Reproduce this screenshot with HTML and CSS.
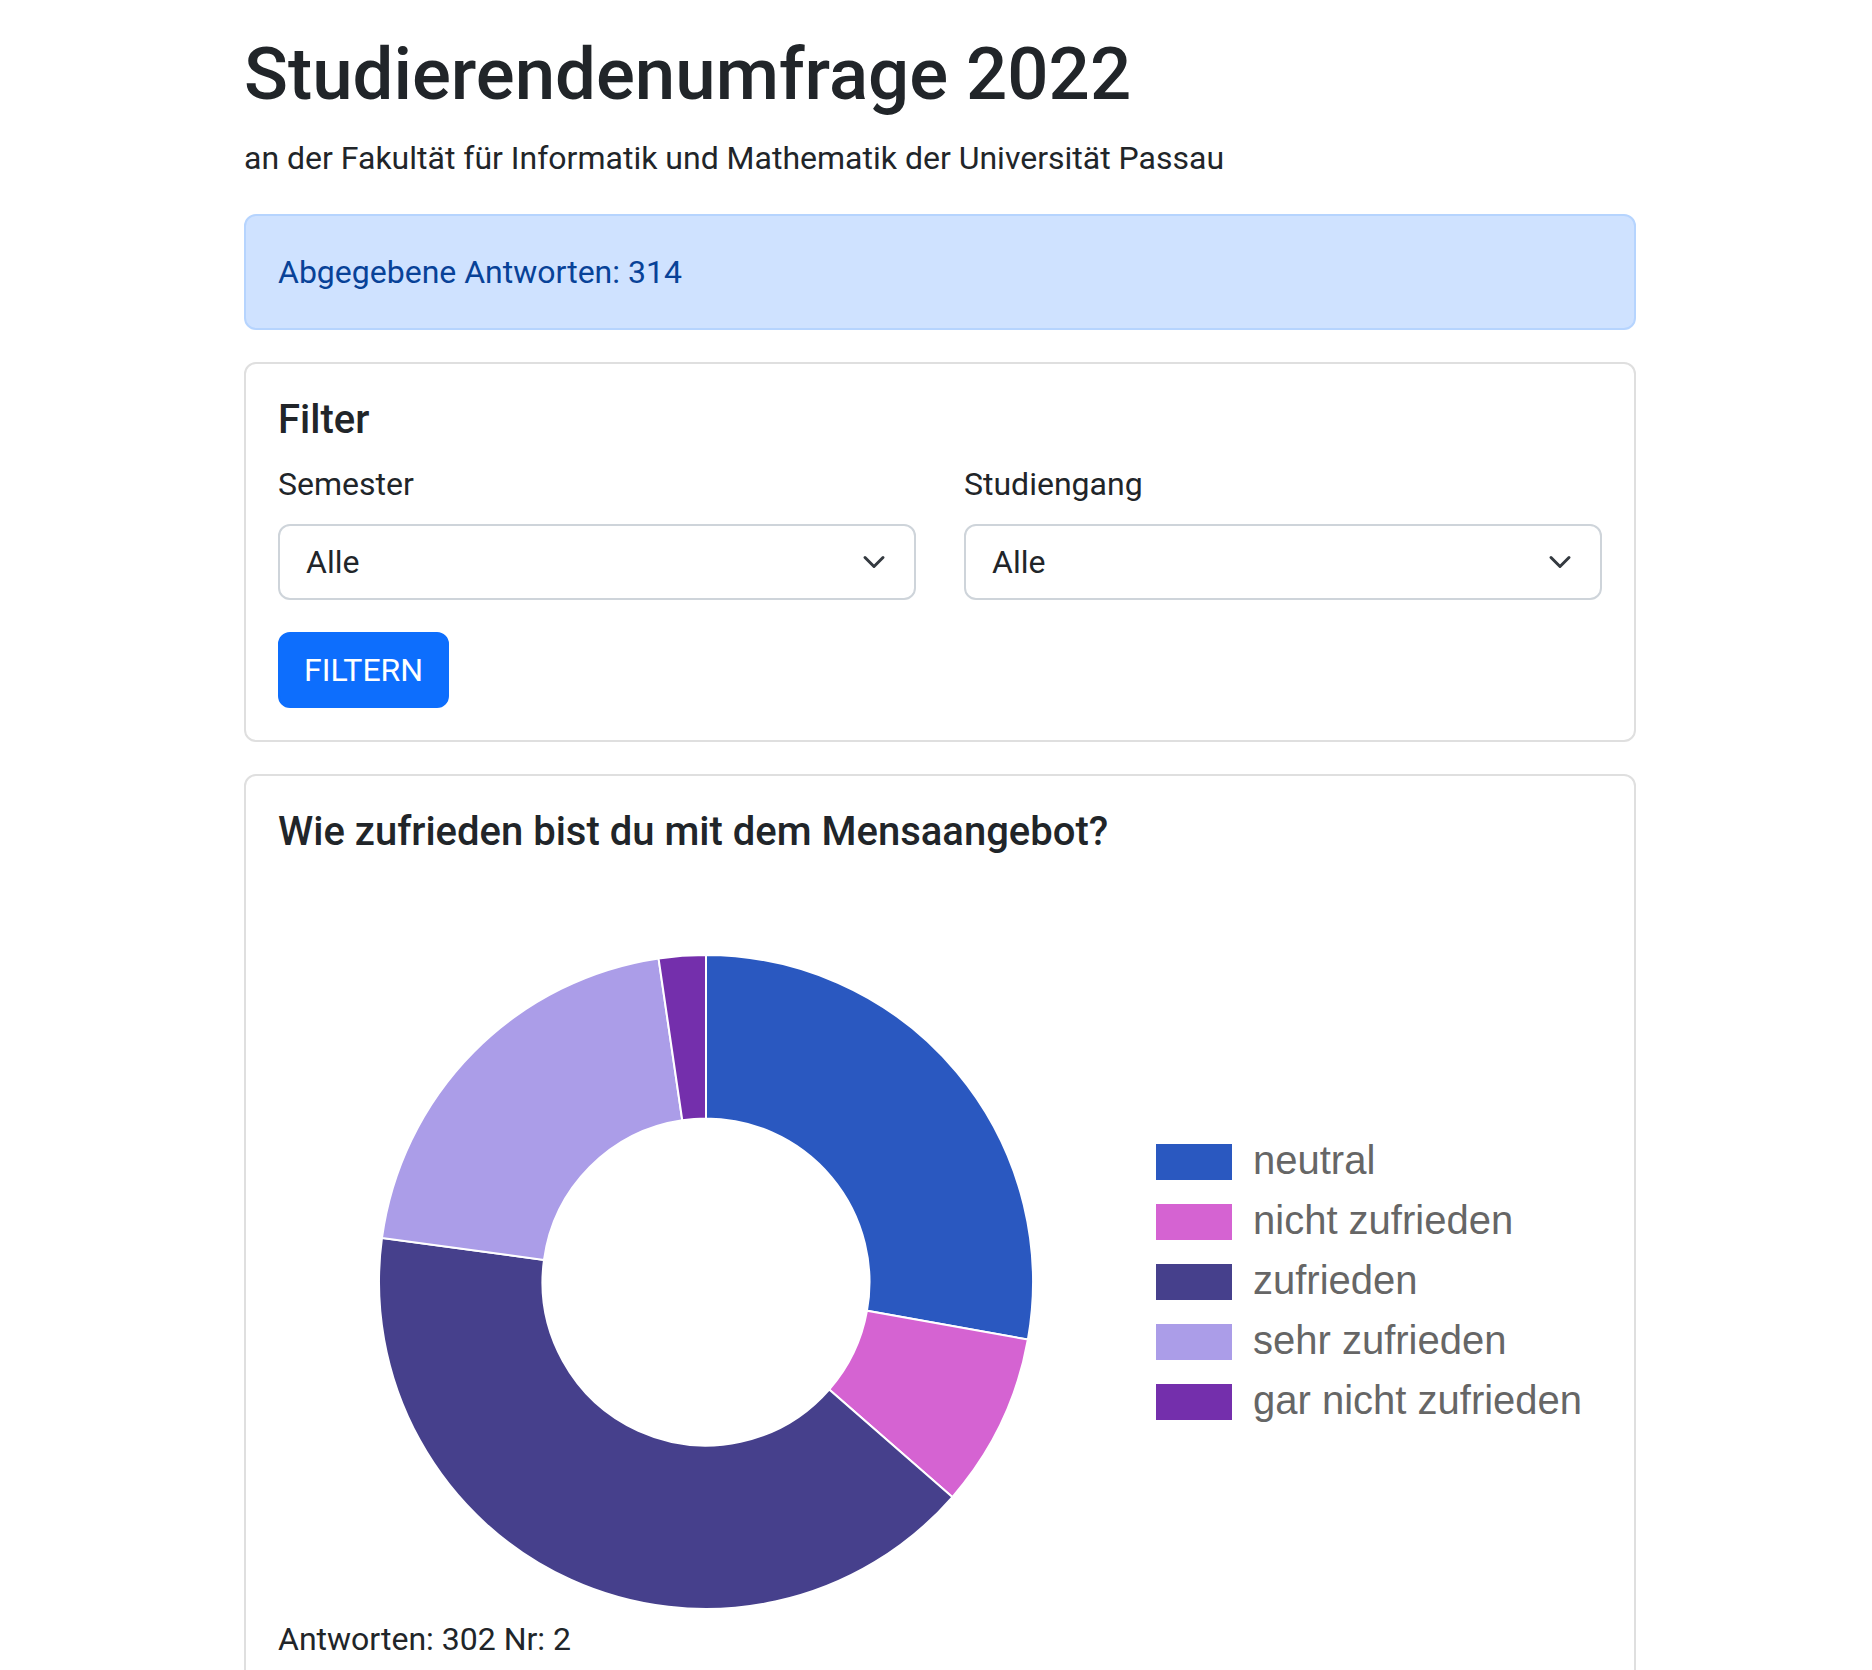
FILE: index.html
```html
<!DOCTYPE html>
<html lang="de">
<head>
<meta charset="utf-8">
<title>Studierendenumfrage 2022</title>
<link rel="stylesheet" href="styles.css">
</head>
<body>
<div class="container">
  <h1 class="title">Studierendenumfrage 2022</h1>
  <p class="subtitle">an der Fakultät für Informatik und Mathematik der Universität Passau</p>

  <div class="alert">Abgegebene Antworten: 314</div>

  <div class="card">
    <div class="card-body">
      <h5 class="card-title">Filter</h5>
      <div class="filter-row">
        <div class="field">
          <label class="field-label">Semester</label>
          <div class="select">
            <span>Alle</span>
            <svg class="chevron" viewBox="0 0 16 16" width="24" height="24"><path d="M2 5l6 6 6-6"/></svg>
          </div>
        </div>
        <div class="field">
          <label class="field-label">Studiengang</label>
          <div class="select">
            <span>Alle</span>
            <svg class="chevron" viewBox="0 0 16 16" width="24" height="24"><path d="M2 5l6 6 6-6"/></svg>
          </div>
        </div>
      </div>
      <div class="actions">
        <button class="btn" type="button">FILTERN</button>
      </div>
    </div>
  </div>

  <div class="card">
    <div class="card-body">
      <h5 class="card-title">Wie zufrieden bist du mit dem Mensaangebot?</h5>
      <svg class="chart" viewBox="0 0 1324 743" width="1324" height="743">
        <g class="slices">
          <path class="s-neutral" d="M428,83 A327,327 0 0 1 749.9,467.53 L588.95,438.76 A163.5,163.5 0 0 0 428,246.5 Z"/>
          <path class="s-nicht" d="M749.9,467.53 A327,327 0 0 1 674.35,625.05 L551.17,517.52 A163.5,163.5 0 0 0 588.95,438.76 Z"/>
          <path class="s-zufrieden" d="M674.35,625.05 A327,327 0 0 1 103.99,365.92 L265.99,387.96 A163.5,163.5 0 0 0 551.17,517.52 Z"/>
          <path class="s-sehr" d="M103.99,365.92 A327,327 0 0 1 380.55,86.46 L404.27,248.23 A163.5,163.5 0 0 0 265.99,387.96 Z"/>
          <path class="s-gar" d="M380.55,86.46 A327,327 0 0 1 428,83 L428,246.5 A163.5,163.5 0 0 0 404.27,248.23 Z"/>
        </g>
        <g class="legend">
          <rect class="s-neutral" x="878" y="272" width="76" height="36"/>
          <text x="975" y="302">neutral</text>
          <rect class="s-nicht" x="878" y="332" width="76" height="36"/>
          <text x="975" y="362">nicht zufrieden</text>
          <rect class="s-zufrieden" x="878" y="392" width="76" height="36"/>
          <text x="975" y="422">zufrieden</text>
          <rect class="s-sehr" x="878" y="452" width="76" height="36"/>
          <text x="975" y="482">sehr zufrieden</text>
          <rect class="s-gar" x="878" y="512" width="76" height="36"/>
          <text x="975" y="542">gar nicht zufrieden</text>
        </g>
      </svg>
      <p class="answers">Antworten: 302 Nr: 2</p>
    </div>
  </div>
</div>
</body>
</html>
```

FILE: styles.css
```css
html, body {
  margin: 0;
  padding: 0;
  background: #fff;
}

body {
  font-family: Roboto, "Liberation Sans", sans-serif;
  font-size: 32px;
  line-height: 1.5;
  color: #212529;
}

.container {
  width: 1392px;
  margin-left: calc(50% - 692px);
  padding-top: 31px;
}

.title {
  font-size: 72.6px;
  font-weight: 500;
  line-height: 1.2;
  margin: 0 0 16px;
}

.subtitle {
  margin: 0 0 32px;
}

.alert {
  padding: 32px;
  border: 2px solid #b6d4fe;
  background: #cfe2ff;
  color: #084298;
  border-radius: 12px;
  margin-bottom: 32px;
}

.card {
  border: 2px solid #dfdfdf;
  border-radius: 12px;
  margin-bottom: 32px;
}

.card-body {
  padding: 32px;
}

.card-title {
  font-size: 40px;
  font-weight: 500;
  line-height: 1.2;
  margin: 0 0 16px;
}

.filter-row {
  display: grid;
  grid-template-columns: 1fr 1fr;
  column-gap: 48px;
}

.field-label {
  display: block;
  margin-bottom: 16px;
}

.select {
  display: flex;
  align-items: center;
  justify-content: space-between;
  border: 2px solid #ced4da;
  border-radius: 12px;
  padding: 12px 28px 12px 26px;
  background: #fff;
}

.chevron {
  display: block;
  fill: none;
  stroke: #343a40;
  stroke-width: 2;
  stroke-linecap: round;
  stroke-linejoin: round;
}

.actions {
  display: flex;
  margin-top: 32px;
}

.btn {
  font: inherit;
  line-height: 1.5;
  color: #fff;
  background: #0d6efd;
  border: 2px solid #0d6efd;
  border-radius: 12px;
  padding: 12px 24px;
  cursor: pointer;
}

.chart {
  display: block;
  width: 1324px;
  height: 743px;
}

.slices path {
  stroke: #fff;
  stroke-width: 2;
}

.s-neutral { fill: #2a58c0; }
.s-nicht { fill: #d563d2; }
.s-zufrieden { fill: #46408c; }
.s-sehr { fill: #ab9de8; }
.s-gar { fill: #742fac; }

.legend text {
  font-family: "Liberation Sans", Arial, sans-serif;
  font-size: 40px;
  fill: #666;
}

.answers {
  margin: 0;
}
```
